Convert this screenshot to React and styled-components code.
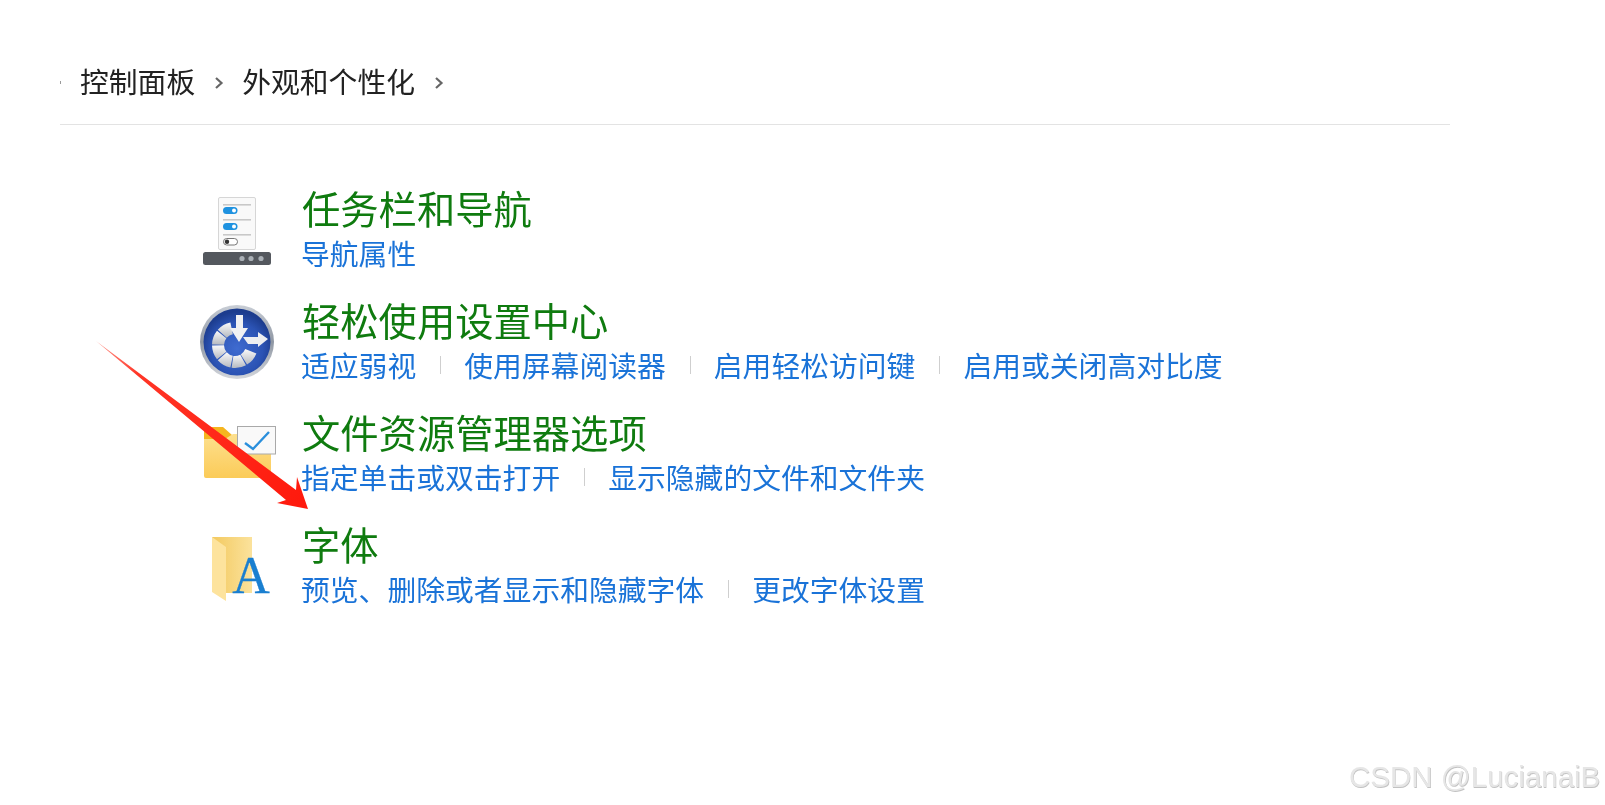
import React from "react";
import styled, { createGlobalStyle } from "styled-components";

const Global = createGlobalStyle`
  html, body { margin: 0; padding: 0; background: #fff; }
  body { font-family: "Noto Sans CJK SC", "Liberation Sans", sans-serif; overflow: hidden; }
`;
const Page = styled.div`
  position: relative;
  width: 1605px;
  height: 805px;
  overflow: hidden;
  background: #fff;
  filter: blur(0.35px);
`;
const Panel = styled.div`
  width: 1390px;
  margin-left: 60px;
  padding-top: 58px;
`;
const Breadcrumb = styled.nav`
  display: flex;
  align-items: center;
  height: 46px;
  padding-bottom: 20px;
  border-bottom: 1px solid #e3e3e3;
  color: #222;
  font-size: 28.8px;
  line-height: 46px;
`;
const Tick = styled.span`
  width: 1px;
  height: 3px;
  margin: 2px 19px 0 0;
  background: #9a9a9a;
`;
const Crumb = styled.span`
  white-space: nowrap;
`;
const Chevron = styled.svg`
  width: 10px;
  height: 14px;
  margin: 3px 18.5px 0 18.5px;
`;
const List = styled.div`
  display: flex;
  flex-direction: column;
  padding: 60px 0 0 137px;
`;
const Row = styled.section`
  display: grid;
  grid-template-columns: 80px 1fr;
  column-gap: 25px;
  height: 112px;
`;
const IconBox = styled.svg`
  display: block;
  width: 80px;
  height: 80px;
  margin-top: 5px;
`;
const Body = styled.div`
  display: flex;
  flex-direction: column;
`;
const Title = styled.h2`
  margin: 0 0 1.5px;
  height: 46px;
  font-size: 38.3px;
  line-height: 46px;
  font-weight: 400;
  color: #0f7b0f;
  white-space: nowrap;
`;
const Links = styled.div`
  display: flex;
  align-items: center;
  height: 40px;
  margin-left: -1px;
`;
const TaskLink = styled.a`
  font-size: 28.8px;
  line-height: 40px;
  color: #1a73d8;
  white-space: nowrap;
`;
const Sep = styled.span`
  width: 1px;
  height: 18px;
  margin: 0 23px 0 24px;
  background: #cfcfcf;
`;
const ArrowSvg = styled.svg`
  position: absolute;
  left: 0;
  top: 0;
  width: 1605px;
  height: 805px;
  pointer-events: none;
`;
const Watermark = styled.div`
  position: absolute;
  left: 1349px;
  top: 758px;
  font-family: "Liberation Sans", sans-serif;
  font-size: 29.5px;
  line-height: 38px;
  color: #e6e6e6;
  text-shadow: 0.6px 0.6px 0.6px #c2c2c2;
  white-space: nowrap;
`;

const TaskbarIcon = () => (
  <IconBox viewBox="0 0 80 80">
    <rect x="21.5" y="7.5" width="37" height="52" rx="1.5" fill="#f9f9f9" stroke="#d6d6d6" />
    {[14, 29, 44].map((y) => (
      <rect key={y} x="26" y={y} width="28" height="1.6" fill="#c8c8c8" />
    ))}
    <rect x="26" y="17" width="14.5" height="7" rx="3.5" fill="#1e92e0" />
    <circle cx="37" cy="20.5" r="2" fill="#fff" />
    <rect x="26" y="33" width="14.5" height="7" rx="3.5" fill="#1e92e0" />
    <circle cx="37" cy="36.5" r="2" fill="#fff" />
    <rect x="26.5" y="48.5" width="14" height="6.5" rx="3.2" fill="#fff" stroke="#777" />
    <circle cx="30" cy="51.8" r="2.2" fill="#333" />
    <rect x="6" y="62" width="68" height="13" rx="2.5" fill="#54585e" />
    {[45, 54, 64].map((x) => (
      <circle key={x} cx={x} cy="68.5" r="2.6" fill="#aab0b6" />
    ))}
  </IconBox>
);

const polar = (r, deg) => {
  const a = ((deg - 90) * Math.PI) / 180;
  return [38 + r * Math.cos(a), 43 + r * Math.sin(a)].map((n) => n.toFixed(2)).join(" ");
};
const sector = (from, to) =>
  `M${polar(11, from)} L${polar(23, from)} A23 23 0 0 0 ${polar(23, to)} L${polar(11, to)} A11 11 0 0 1 ${polar(11, from)} Z`;

const AccessIcon = () => (
  <IconBox viewBox="0 0 80 80">
    <defs>
      <radialGradient id="disc" cx="50%" cy="60%" r="55%">
        <stop offset="0" stopColor="#3f6bd0" />
        <stop offset="0.7" stopColor="#2b53b4" />
        <stop offset="1" stopColor="#1c3c8e" />
      </radialGradient>
      <linearGradient id="ring" x1="0" y1="0" x2="0" y2="1">
        <stop offset="0" stopColor="#c9ced6" />
        <stop offset="0.5" stopColor="#8f97a3" />
        <stop offset="1" stopColor="#d4d7dc" />
      </linearGradient>
      <linearGradient id="wedge" x1="0" y1="0" x2="0" y2="1">
        <stop offset="0" stopColor="#fafafa" />
        <stop offset="1" stopColor="#b5b9c0" />
      </linearGradient>
    </defs>
    <circle cx="40" cy="40" r="37" fill="url(#ring)" />
    <circle cx="40" cy="40" r="33.5" fill="url(#disc)" />
    {[350, 310, 270, 230, 190, 150].map((a) => (
      <path key={a} d={sector(a - 1.5, a - 38.5)} fill="url(#wedge)" />
    ))}
    <path d="M39 13 H46 V26 H51 L42 40 L33 26 H39 Z" fill="#f0f1f3" />
    <path d="M46 35 H61 V30 L71 37 L61 45 V42 H51 Z" fill="#eceef1" />
  </IconBox>
);

const FolderIcon = () => (
  <IconBox viewBox="0 0 80 80">
    <defs>
      <linearGradient id="fold" x1="0" y1="0" x2="0" y2="1">
        <stop offset="0" stopColor="#fde08e" />
        <stop offset="1" stopColor="#fbcb58" />
      </linearGradient>
    </defs>
    <path d="M7 16 Q7 13 10 13 H26 L35 21 H74 V30 H7 Z" fill="#f5b51f" />
    <path d="M7 25 H28 L36 20 H74 V62 Q74 64 72 64 H9 Q7 64 7 62 Z" fill="url(#fold)" />
    <rect x="40.5" y="12.5" width="38" height="27.5" fill="#f9f9f9" stroke="#a9a9a9" />
    <path d="M48 29 L56 35 L72 18" fill="none" stroke="#2a8fdc" strokeWidth="2.4" />
  </IconBox>
);

const FontIcon = () => (
  <IconBox viewBox="0 0 80 80">
    <defs>
      <linearGradient id="back" x1="0" y1="0" x2="1" y2="0">
        <stop offset="0" stopColor="#f3c95f" />
        <stop offset="1" stopColor="#fbe29c" />
      </linearGradient>
    </defs>
    <path d="M15 11 H55 V67 H29 Z" fill="url(#back)" />
    <path d="M15 11 L29 21 V75 L15 66 Z" fill="#fde39d" />
    <text
      x="54"
      y="67"
      textAnchor="middle"
      fontFamily="'Liberation Serif', serif"
      fontSize="52"
      fill="#1a7fd0"
      stroke="#1a7fd0"
      strokeWidth="0.3"
    >
      A
    </text>
  </IconBox>
);

const rows = [
  { icon: <TaskbarIcon />, title: "任务栏和导航", links: ["导航属性"] },
  { icon: <AccessIcon />, title: "轻松使用设置中心", links: ["适应弱视", "使用屏幕阅读器", "启用轻松访问键", "启用或关闭高对比度"] },
  { icon: <FolderIcon />, title: "文件资源管理器选项", links: ["指定单击或双击打开", "显示隐藏的文件和文件夹"] },
  { icon: <FontIcon />, title: "字体", links: ["预览、删除或者显示和隐藏字体", "更改字体设置"] },
];

const Arrowhead = () => (
  <Chevron viewBox="0 0 10 14">
    <path d="M2 2 L7.5 7 L2 12" fill="none" stroke="#666" strokeWidth="2.2" />
  </Chevron>
);

export default function App() {
  return (
    <Page>
      <Global />
      <Panel>
        <Breadcrumb>
          <Tick />
          <Crumb>控制面板</Crumb>
          <Arrowhead />
          <Crumb>外观和个性化</Crumb>
          <Arrowhead />
        </Breadcrumb>
        <List>
          {rows.map((r) => (
            <Row key={r.title}>
              {r.icon}
              <Body>
                <Title>{r.title}</Title>
                <Links>
                  {r.links.map((l, i) => (
                    <React.Fragment key={l}>
                      {i > 0 && <Sep />}
                      <TaskLink>{l}</TaskLink>
                    </React.Fragment>
                  ))}
                </Links>
              </Body>
            </Row>
          ))}
        </List>
      </Panel>
      <ArrowSvg viewBox="0 0 1605 805">
        <defs>
          <linearGradient id="arrowFade" x1="97" y1="342" x2="300" y2="500" gradientUnits="userSpaceOnUse">
            <stop offset="0" stopColor="#ff9a90" />
            <stop offset="0.2" stopColor="#ff3526" />
            <stop offset="1" stopColor="#ff1a0d" />
          </linearGradient>
        </defs>
        <polygon points="96,341 296,490 297,477 308,509 277,503 286,500" fill="url(#arrowFade)" />
      </ArrowSvg>
      <Watermark>CSDN @LucianaiB</Watermark>
    </Page>
  );
}
